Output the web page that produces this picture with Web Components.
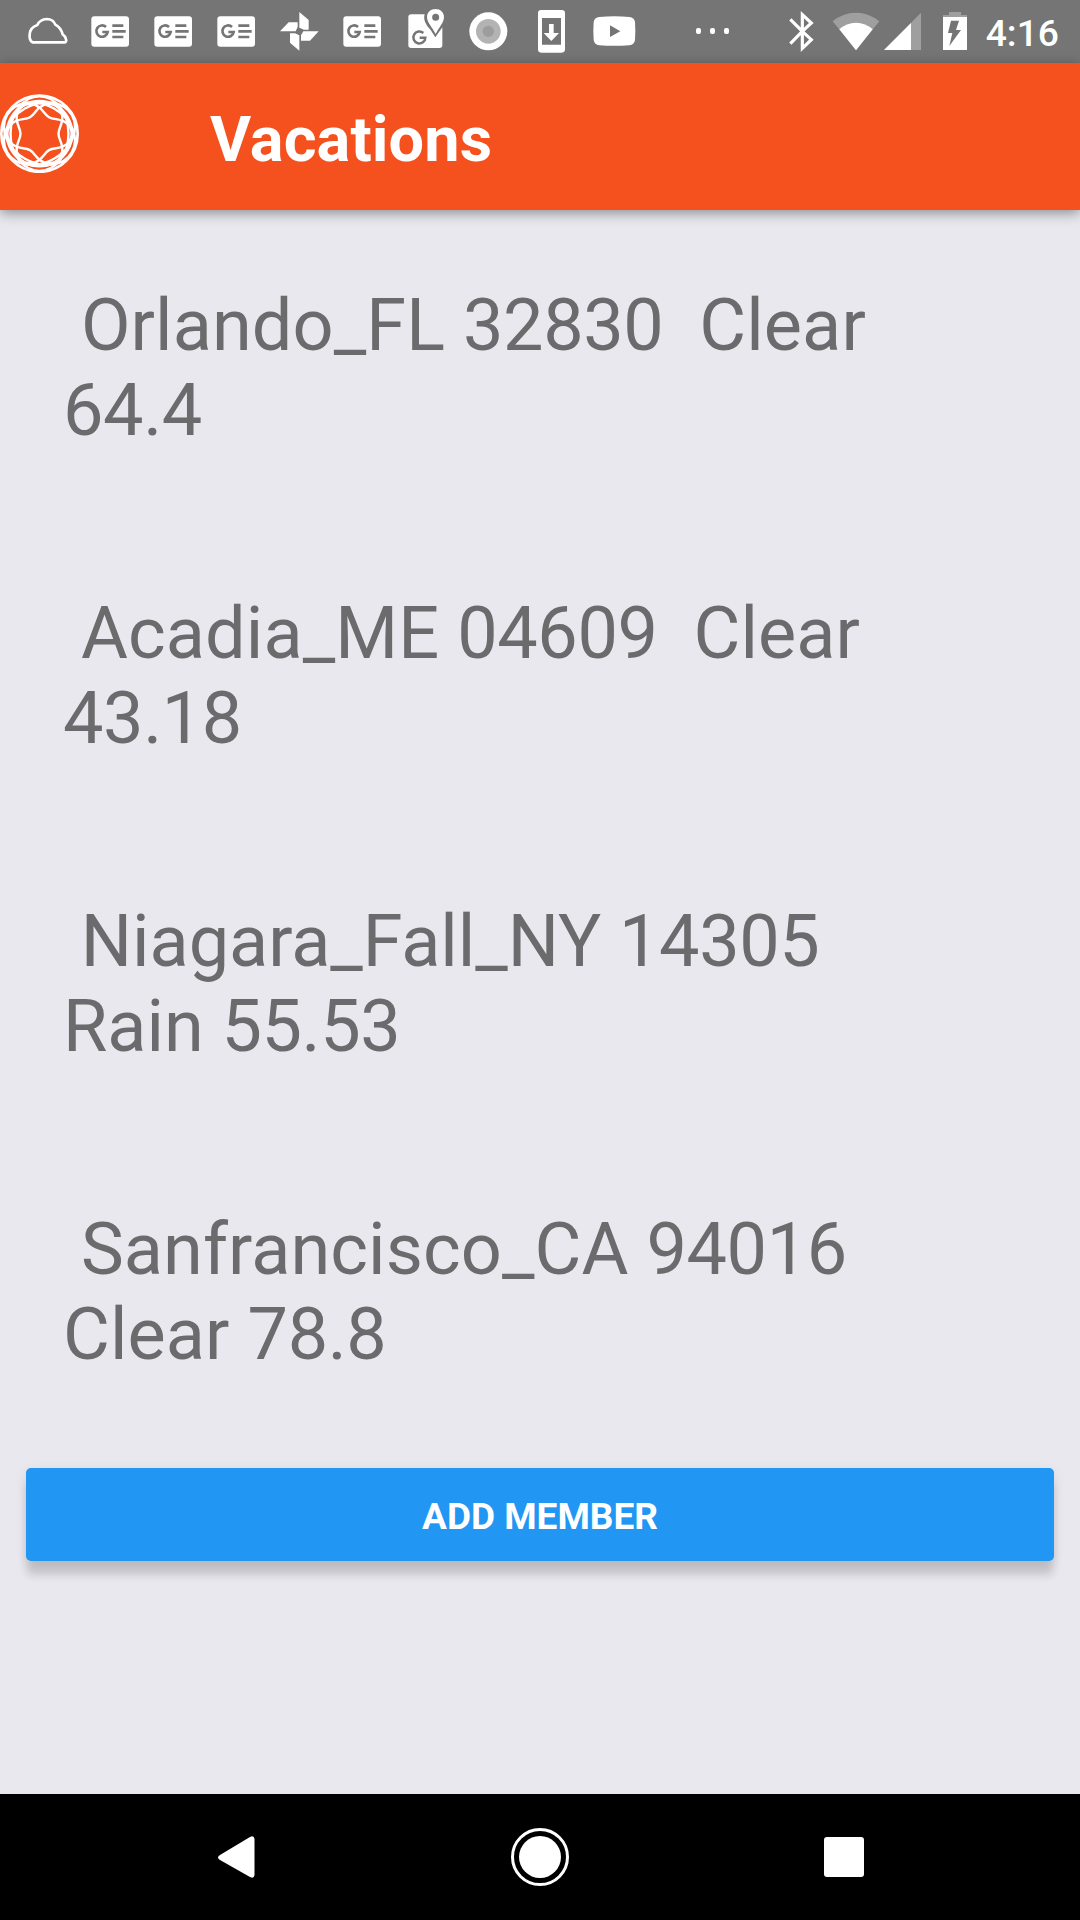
<!DOCTYPE html>
<html lang="en">
<head>
<meta charset="utf-8">
<title>Vacations</title>
<style>
html,body{margin:0;padding:0}
body{width:1080px;height:1920px;overflow:hidden;font-family:Roboto,"Liberation Sans",sans-serif}
</style>
</head>
<body>
<vacation-app></vacation-app>
<script>
const define=(name,html)=>{
  const t=document.createElement('template');
  t.innerHTML=html;
  customElements.define(name,class extends HTMLElement{
    constructor(){super();this.attachShadow({mode:'open'}).appendChild(t.content.cloneNode(true));}
  });
};

const ICONS={
  cloud:['48 0 189 189','<path d="M97 127H194Q200 127 198 118Q196 108 188 103Q182 82 166 74Q160 57 140 57Q120 58 112 75Q91 82 89 103Q87 119 97 127Z" fill="none" stroke="#fff" stroke-width="8" stroke-linejoin="round"/>'],
  news:['237 0 189 189','<rect x="274" y="48.500" width="113" height="91.500" rx="9" fill="#fff"/><path d="M318 81A17 17 0 1 0 323 96H307" fill="none" stroke="#757575" stroke-width="8"/><path d="M337 77H370M337 94H377M337 111H370" stroke="#757575" stroke-width="8"/>'],
  photos:['24 0 189 189','<path fill="#fff" d="M118 36L146 60V89H132L118 83ZM60 94L86 67H113V81L107 94ZM118 152L90 128V100H105L118 106ZM176 94L150 122H123V106L130 94Z"/>'],
  maps:['402 0 189 189','<path fill="#fff" d="M454 43H494C489 60 498 75 512 90L526 112L547 82V136Q547 144 538 144H454Q445 144 445 136V51Q445 43 454 43Z"/><path d="M490 99A18 18 0 1 0 496 113H479" fill="none" stroke="#757575" stroke-width="7.500"/><path fill="#fff" fill-rule="evenodd" d="M527 27C512 27 501 37 501 51C501 68 516 80 527 102C538 80 552 68 552 51C552 37 541 27 527 27ZM527 41A10.500 10.500 0 1 1 527 62A10.500 10.500 0 1 1 527 41Z"/>'],
  disc:['591 0 189 189','<circle cx="685" cy="94" r="57" fill="#fff"/><circle cx="685" cy="94" r="37" fill="#b3b3b3"/><circle cx="685" cy="94" r="17" fill="#9d9d9d"/>'],
  update:['0 0 189 189','<path fill="#fff" fill-rule="evenodd" d="M63 30H125Q135 30 135 40V148Q135 158 125 158H63Q54 158 54 148V40Q54 30 63 30ZM66 54V134H123V54Z"/><path fill="#fff" d="M87 72H101V99H117L94 123L71 99H87Z"/>'],
  video:['189 0 189 189','<path fill="#fff" fill-rule="evenodd" d="M238 51Q283 47 328 51Q343 52 345 66Q347 93 345 120Q343 134 328 136Q283 139 238 136Q223 134 221 120Q219 93 221 66Q223 52 238 51ZM270 76V111L301 94Z"/>'],
  more:['378 0 270 189','<g fill="#fff"><rect x="528" y="84" width="15" height="18" rx="6"/><rect x="570" y="84" width="15" height="18" rx="6"/><rect x="612" y="84" width="15" height="18" rx="6"/></g>'],
  bluetooth:['30 0 126 189','<path d="M61 58L97 94L61 131M97 94L124 69L97 44V145L124 119L97 94" fill="none" stroke="#fff" stroke-width="9.500"/>'],
  wifi:['156 0 180 189','<path fill="#9f9f9f" d="M188 64Q218 38 258 38Q297 38 328 64L258 151Z"/><path fill="#fff" d="M208 88Q230 68 258 68Q286 68 308 88L258 151Z"/>'],
  signal:['336 0 126 189','<path fill="#9f9f9f" d="M342 150L453 38V150Z"/><path fill="#fff" d="M342 150L423 69V150Z"/>'],
  battery:['462 0 180 189','<path fill="#9f9f9f" d="M537 36H573V45H591V52H519V45H537Z"/><path fill="#fff" fill-rule="evenodd" d="M519 51H591V150H519ZM543 62L534 99H547L538 138L573 90H558L567 62Z"/>']
};
customElements.define('status-icon',class extends HTMLElement{
  connectedCallback(){
    const [box,art]=ICONS[this.getAttribute('name')];
    const w=box.split(' ')[2]/3;
    if(!this.shadowRoot)this.attachShadow({mode:'open'});
    this.shadowRoot.innerHTML=`<style>:host{display:block;flex:none;width:${w}px;height:63px}svg{display:block}</style><svg width="${w}" height="63" viewBox="${box}">${art}</svg>`;
  }
});

define('status-bar',`<style>
:host{display:flex;justify-content:space-between;height:63px;background:#757575;color:#fff;flex:none}
div{display:flex;align-items:flex-start}
.l{padding-left:16px}
.r{width:300px}
span{font-size:37.200px;font-weight:500;line-height:44px;padding:11px 0 0 1.700px;white-space:nowrap}
</style>
<div class="l">${['cloud','news','news','news','photos','news','maps','disc','update','video','more'].map(n=>`<status-icon name="${n}"></status-icon>`).join('')}</div>
<div class="r">${['bluetooth','wifi','signal','battery'].map(n=>`<status-icon name="${n}"></status-icon>`).join('')}<span>4:16</span></div>`);

const lobe='<path d="M-57 0C-57-18-72-30-68-55C-62-85-30-98 0-98C30-98 62-85 68-55C72-30 57-18 57 0C57 18 72 30 68 55C62 85 30 98 0 98C-30 98-62 85-68 55C-72 30-57 18-57 0Z"/><ellipse rx="87" ry="112"/>';
define('ring-logo',`<style>:host{display:block;flex:none;width:79px;height:79px}svg{display:block}</style>
<svg width="79" height="79" viewBox="0 42 237 237"><g transform="translate(118.500 161)" fill="none" stroke="#fff" stroke-width="7.200"><circle r="114.500" stroke-width="8"/><g>${lobe}</g><g transform="rotate(60)">${lobe}</g><g transform="rotate(120)">${lobe}</g></g></svg>`);

define('app-header',`<style>
:host{display:flex;flex:none;height:147px;box-sizing:border-box;background:#f5511e;color:#fff;box-shadow:0 3px 12px rgba(0,0,0,.4);position:relative;align-items:flex-start}
ring-logo{margin-top:31px}
h1{margin:40px 0 0 131px;font-size:63px;line-height:74px;font-weight:700;letter-spacing:.1px;white-space:nowrap}
</style><ring-logo></ring-logo><h1><slot></slot></h1>`);

define('vacation-item',`<style>
:host{display:block;box-sizing:border-box;height:308px;padding:73px 63px 65px;font-size:72px;line-height:85px;letter-spacing:.1px;color:#6b6b6d;white-space:pre}
:host([tight]){letter-spacing:-.05px}
::slotted(span){letter-spacing:-.4px}
</style><slot></slot>`);

define('raised-button',`<style>
:host{display:block;margin:26px 26px 0}
button{display:block;width:100%;height:93px;border:0;border-radius:5px;background:#2196f3;color:#fff;font:700 37px/44px Roboto,sans-serif;padding:4px 0 0;text-transform:uppercase;box-shadow:0 15px 9px -1px rgba(0,0,0,.15),0 3px 12px rgba(0,0,0,.09)}
</style><button><slot></slot></button>`);

define('nav-bar',`<style>
:host{display:flex;flex:none;height:126px;background:#000;justify-content:center;align-items:center}
svg{display:block;width:248px;height:126px}
</style>
<svg viewBox="168 0 248 126"><path d="M220 61L250 43Q254 41 254.500 45V81Q254 85 250 83L220 66Q216 63.500 220 61Z" fill="#fff"/></svg>
<svg viewBox="416 0 248 126"><circle cx="540" cy="63" r="27.500" fill="none" stroke="#fff" stroke-width="3"/><circle cx="540" cy="63" r="21" fill="#fff"/></svg>
<svg viewBox="664 0 248 126"><rect x="824" y="43" width="40" height="40" rx="3" fill="#fff"/></svg>`);

define('vacation-app',`<style>
:host{display:flex;flex-direction:column;width:1080px;height:1920px;background:#e9e8ee}
main{flex:1;min-height:0}
</style>
<status-bar></status-bar>
<app-header>Vacations</app-header>
<main>
<vacation-item> Orlando_FL <span>32830</span>  Clear
<span>64.4</span></vacation-item>
<vacation-item> Acadia_ME <span>04609</span>  Clear
<span>43.18</span></vacation-item>
<vacation-item tight> Niagara_Fall_NY <span>14305</span>
Rain <span>55.53</span></vacation-item>
<vacation-item> Sanfrancisco_CA <span>94016</span>
Clear <span>78.8</span></vacation-item>
<raised-button>Add member</raised-button>
</main>
<nav-bar></nav-bar>`);
</script>
</body>
</html>
